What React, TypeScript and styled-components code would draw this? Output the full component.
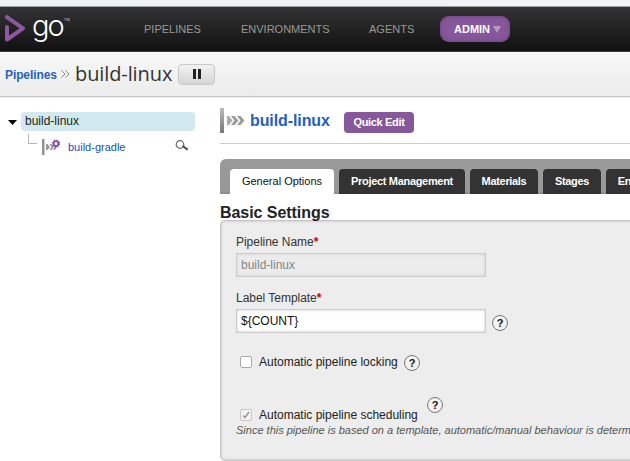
import React from "react";
import styled, { createGlobalStyle, css } from "styled-components";

const GlobalStyle = createGlobalStyle`
  * { box-sizing: border-box; }
  html, body { margin: 0; padding: 0; overflow: hidden; background: #fff; }
  body { font-family: "Liberation Sans", Arial, sans-serif; font-size: 12px; color: #333; }
`;

const Page = styled.div`
  width: 630px;
  height: 461px;
  overflow: hidden;
  display: flex;
  flex-direction: column;
`;

const BrowserEdge = styled.div`
  height: 7px;
  flex: none;
  background: linear-gradient(90deg, #edf3f4, #f1f2f6);
  border-bottom: 1px solid #9da3a3;
`;

const Header = styled.header`
  height: 45px;
  flex: none;
  display: flex;
  align-items: center;
  background: linear-gradient(#333, #111);
  border-bottom: 1px solid #3c3c3c;
`;

const Logo = styled.div`
  display: flex;
  width: 144px;
  height: 44px;
  padding-left: 5px;
`;

const LogoMark = styled.svg`
  display: block;
  flex: none;
  margin-top: 8px;
`;

const Wordmark = styled.span`
  width: 32px;
  margin: 0 0 0 6px;
  font: 300 29px/38px Inter, sans-serif;
  letter-spacing: -2px;
  color: #fff;
`;

const Trademark = styled.span`
  margin-top: 10px;
  font-size: 4px;
  line-height: 5px;
  color: #ccc;
`;

const Nav = styled.nav`
  display: flex;
  align-items: center;
  font-size: 11px;
  color: #999;
`;

const NavItem = styled.a<{ $width: number }>`
  width: ${(p) => p.$width}px;
  white-space: nowrap;
`;

const AdminButton = styled.button`
  display: flex;
  align-items: center;
  gap: 3px;
  width: 70px;
  height: 26px;
  padding: 0 0 0 14px;
  border: 0;
  border-radius: 9px;
  background: #86579b;
  box-shadow: inset 0 0 4px #693f7c;
  color: #fff;
  font: bold 11px "Liberation Sans", Arial, sans-serif;
`;

const TitleBar = styled.div`
  height: 45px;
  flex: none;
  display: flex;
  align-items: center;
  padding-left: 5px;
  background: linear-gradient(#f8f8f8, #ececec);
  border-bottom: 1px solid #c8c8c8;
  box-shadow: 0 1px 1px #eee;
`;

const Crumb = styled.a`
  width: 56px;
  margin-top: 2px;
  font-weight: bold;
  letter-spacing: -0.1px;
  color: #2762c0;
`;

const PageTitle = styled.h1`
  width: 103px;
  margin: 0 0 0 5px;
  font: 400 20px/28px "Open Sans", sans-serif;
  letter-spacing: -0.1px;
  color: #333;
  white-space: nowrap;
`;

const PauseButton = styled.button`
  display: flex;
  align-items: center;
  justify-content: center;
  gap: 2px;
  width: 37px;
  height: 21px;
  padding: 0 0 1px;
  border: 1px solid #c8c8c8;
  border-radius: 4px;
  background: linear-gradient(#f2f2f2, #d5d5d5);
`;

const PauseBar = styled.span`
  width: 3px;
  height: 10px;
  background: #222;
`;

const Body = styled.div`
  flex: 1;
  display: flex;
  min-height: 0;
`;

const Sidebar = styled.aside`
  width: 220px;
  flex: none;
  padding: 15px 25px 0 8px;
`;

const TreeRoot = styled.div`
  display: flex;
  align-items: center;
`;

const TreeLabel = styled.div`
  width: 174px;
  height: 19px;
  margin-left: 4px;
  padding-left: 4px;
  border-radius: 4px;
  background: #d2eaef;
  color: #222;
  line-height: 18px;
`;

const TreeChild = styled.div`
  display: flex;
  align-items: flex-start;
  padding-left: 20px;
`;

const Branch = styled.span`
  width: 9px;
  height: 10px;
  margin-top: 3px;
  border: solid #b5b5b5;
  border-width: 0 0 1px 1px;
`;

const TreeLink = styled.a`
  width: 107px;
  margin: 10px 0 0 8px;
  font-size: 11px;
  line-height: 13px;
  color: #1c50b5;
`;

const IconBox = styled.svg<{ $top?: number; $left?: number }>`
  display: block;
  flex: none;
  margin: ${(p) => p.$top ?? 0}px 0 0 ${(p) => p.$left ?? 0}px;
`;

const Main = styled.main`
  width: 410px;
  flex: none;
`;

const MainHeader = styled.div`
  height: 47px;
  display: flex;
  align-items: flex-start;
  border-bottom: 1px solid #ccc;
`;

const PipelineName = styled.h2`
  width: 94px;
  margin: 14px 0 0 5px;
  font-size: 16px;
  line-height: 20px;
  letter-spacing: -0.1px;
  color: #2460bb;
  white-space: nowrap;
`;

const QuickEdit = styled.button`
  width: 70px;
  height: 21px;
  margin-top: 15px;
  padding: 0;
  border: 0;
  border-radius: 4px;
  background: #86579b;
  color: #fff;
  font: bold 11px/21px "Liberation Sans", Arial, sans-serif;
  letter-spacing: -0.35px;
`;

const TabBar = styled.div`
  display: flex;
  align-items: flex-end;
  gap: 5px;
  width: 460px;
  height: 35px;
  margin-top: 15px;
  padding-left: 10px;
  border-radius: 6px 0 0 0;
  background: linear-gradient(#999 90%, #8a8a8a);
`;

const Tab = styled.button<{ $width: number; $active?: boolean }>`
  flex: none;
  width: ${(p) => p.$width}px;
  height: 25px;
  padding: 0;
  border: 0;
  border-radius: 4px 4px 0 0;
  white-space: nowrap;
  font: bold 11px/25px "Liberation Sans", Arial, sans-serif;
  letter-spacing: -0.32px;
  color: #fff;
  background: #333;
  ${(p) =>
    p.$active &&
    css`
      font-weight: normal;
      letter-spacing: 0;
      color: #111;
      background: #fff;
    `}
`;

const SectionTitle = styled.h3`
  margin: 8px 0 0;
  height: 18px;
  font-size: 16px;
  line-height: 22px;
  letter-spacing: -0.05px;
  color: #222;
`;

const Panel = styled.section`
  width: 500px;
  height: 241px;
  padding: 14px 0 0 15px;
  border: 1px solid #c5c5c5;
  border-radius: 5px;
  background: #ededed;
  box-shadow: inset 0 0 3px #bbb;
  display: flex;
  flex-direction: column;
`;

const FieldLabel = styled.label`
  height: 18px;
  line-height: 14px;
  letter-spacing: -0.03px;
  color: #333;
`;

const Required = styled.span`
  color: #c00;
  font-weight: bold;
`;

const FieldRow = styled.div<{ $height: number }>`
  display: flex;
  align-items: flex-start;
  height: ${(p) => p.$height}px;
`;

const TextInput = styled.input`
  width: 250px;
  height: 24px;
  padding: 0 4px;
  border: 1px solid #ccc;
  border-radius: 0;
  background: #fff;
  box-shadow: inset 0 0 3px #ccc;
  color: #111;
  font: 12px "Liberation Sans", Arial, sans-serif;
  &:disabled {
    background: #ececec;
    color: #858585;
  }
`;

const Check = styled.span<{ $disabled?: boolean }>`
  display: flex;
  width: 12px;
  height: 12px;
  margin: 7px 7px 0 4px;
  border: 1px solid ${(p) => (p.$disabled ? "#c6c6c6" : "#aaa")};
  border-radius: 2px;
  background: ${(p) => (p.$disabled ? "#f3f3f3" : "#fff")};
`;

const CheckLabel = styled.span<{ $width: number }>`
  width: ${(p) => p.$width}px;
  margin-top: 6px;
  line-height: 14px;
  color: #222;
  white-space: nowrap;
`;

const Note = styled.p`
  margin: 0;
  font-size: 11px;
  font-style: italic;
  line-height: 14px;
  color: #555;
  white-space: nowrap;
`;

const HelpBadge = styled.span<{ $top?: number; $left?: number }>`
  display: flex;
  align-items: center;
  justify-content: center;
  width: 16px;
  height: 16px;
  margin: ${(p) => p.$top ?? 0}px 0 0 ${(p) => p.$left ?? 0}px;
  border: 1px solid #777;
  border-radius: 50%;
  background: #f2f2f2;
  color: #111;
  font: bold 11px/14px "Liberation Sans", Arial, sans-serif;
`;

const PipelineIcon = () => (
  <IconBox width="25" height="25" viewBox="0 0 25 25" $top={11}>
    <defs>
      <linearGradient id="bar" x1="0" y1="0" x2="0" y2="1">
        <stop stopColor="#bbb" />
        <stop offset="1" stopColor="#777" />
      </linearGradient>
    </defs>
    <rect width="4" height="25" fill="url(#bar)" />
    <path d="M7 8h2l3.5 4.5L9 17H7z" fill="#aaa" />
    <path d="M11 8h3.5l4 4.5-4 4.5H11l3.5-4.5zM17 8h3.5l4 4.5-4 4.5H17l3.5-4.5z" fill="#999" />
  </IconBox>
);

const StageIcon = () => (
  <IconBox width="18" height="16" viewBox="0 0 18 16" $top={8} $left={5}>
    <rect width="2.5" height="16" fill="#929292" />
    <path d="M4 5h1.5l2.5 3-2.5 3H4zM7.5 5h2L12 8l-2.5 3h-2l2-3zM11.5 7h1.5l2 1-2 3h-2l2-3z" fill="#999" />
    <circle cx="14" cy="4.6" r="2.4" fill="#fff" stroke="#864fa0" strokeWidth="1.8" />
    <circle cx="14" cy="4.6" r="3.6" fill="none" stroke="#864fa0" strokeWidth="1.2" strokeDasharray="1.4 1.43" />
  </IconBox>
);

const tabs = [
  { label: "General Options", width: 104, active: true },
  { label: "Project Management", width: 126 },
  { label: "Materials", width: 68 },
  { label: "Stages", width: 58 },
  { label: "Environment", width: 87 },
];

export default function App() {
  return (
    <Page>
      <GlobalStyle />
      <BrowserEdge />
      <Header>
        <Logo>
          <LogoMark width="21" height="27" viewBox="0 0 21 27">
            <path d="M2 12v12.5L18 13.3 2 2.2" fill="none" stroke="#8b58a1" strokeWidth="4" strokeLinejoin="round" strokeLinecap="round" />
          </LogoMark>
          <Wordmark>go</Wordmark>
          <Trademark>TM</Trademark>
        </Logo>
        <Nav>
          <NavItem $width={97}>PIPELINES</NavItem>
          <NavItem $width={128}>ENVIRONMENTS</NavItem>
          <NavItem $width={71}>AGENTS</NavItem>
          <AdminButton>
            ADMIN
            <svg width="8" height="7" viewBox="0 0 8 7">
              <path d="M0 0h8L4 7z" fill="#b39abf" />
            </svg>
          </AdminButton>
        </Nav>
      </Header>
      <TitleBar>
        <Crumb>Pipelines</Crumb>
        <svg width="9" height="8" viewBox="0 0 9 8">
          <path d="M.5.5 4 4 .5 7.5M4.5.5 8 4 4.5 7.5" fill="none" stroke="#888" />
        </svg>
        <PageTitle>build-linux</PageTitle>
        <PauseButton>
          <PauseBar />
          <PauseBar />
        </PauseButton>
      </TitleBar>
      <Body>
        <Sidebar>
          <TreeRoot>
            <IconBox width="9" height="5" viewBox="0 0 9 5" $top={2}>
              <path d="M0 0h9L4.5 5z" fill="#000" />
            </IconBox>
            <TreeLabel>build-linux</TreeLabel>
          </TreeRoot>
          <TreeChild>
            <Branch />
            <StageIcon />
            <TreeLink>build-gradle</TreeLink>
            <IconBox width="14" height="12" viewBox="0 0 14 12" $top={9}>
              <circle cx="5" cy="4.5" r="3.8" fill="#fff" stroke="#666" strokeWidth="1.2" />
              <path d="m8.2 6.4 3.8 2.8" stroke="#555" strokeWidth="2.2" strokeLinecap="round" />
            </IconBox>
          </TreeChild>
        </Sidebar>
        <Main>
          <MainHeader>
            <PipelineIcon />
            <PipelineName>build-linux</PipelineName>
            <QuickEdit>Quick Edit</QuickEdit>
          </MainHeader>
          <TabBar>
            {tabs.map((tab) => (
              <Tab key={tab.label} $width={tab.width} $active={tab.active}>
                {tab.label}
              </Tab>
            ))}
          </TabBar>
          <SectionTitle>Basic Settings</SectionTitle>
          <Panel>
            <FieldLabel>
              Pipeline Name<Required>*</Required>
            </FieldLabel>
            <FieldRow $height={38}>
              <TextInput defaultValue="build-linux" disabled />
            </FieldRow>
            <FieldLabel>
              Label Template<Required>*</Required>
            </FieldLabel>
            <FieldRow $height={40}>
              <TextInput defaultValue="${COUNT}" />
              <HelpBadge $top={6} $left={6}>?</HelpBadge>
            </FieldRow>
            <FieldRow $height={53}>
              <Check />
              <CheckLabel $width={145}>Automatic pipeline locking</CheckLabel>
              <HelpBadge $top={6}>?</HelpBadge>
            </FieldRow>
            <FieldRow $height={21}>
              <Check $disabled>
                <svg width="10" height="10" viewBox="0 0 10 10">
                  <path d="m2 5.5 2 2L8 2" fill="none" stroke="#999" strokeWidth="1.5" />
                </svg>
              </Check>
              <CheckLabel $width={168}>Automatic pipeline scheduling</CheckLabel>
              <HelpBadge $top={-5}>?</HelpBadge>
            </FieldRow>
            <Note>Since this pipeline is based on a template, automatic/manual behaviour is determined by the template.</Note>
          </Panel>
        </Main>
      </Body>
    </Page>
  );
}
